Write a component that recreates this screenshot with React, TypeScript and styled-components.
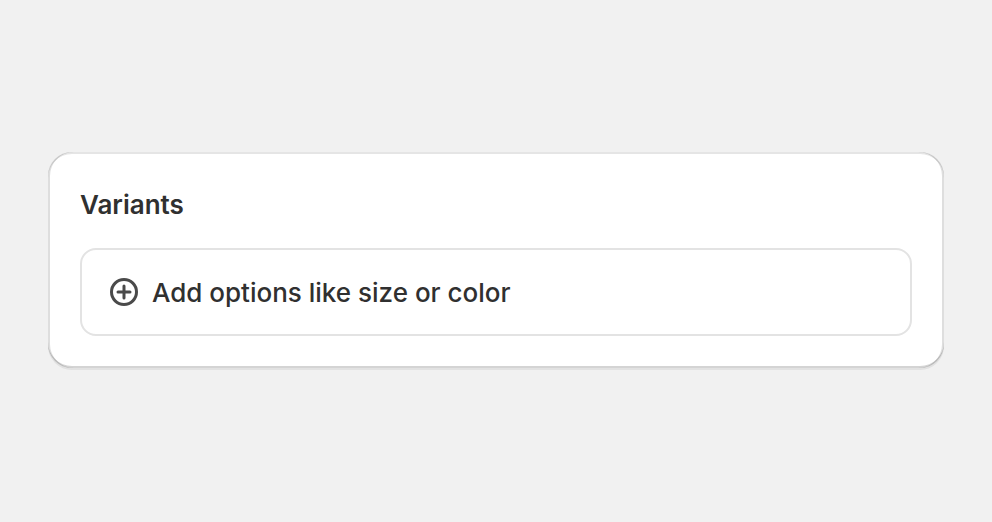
import React from "react";
import styled, { createGlobalStyle } from "styled-components";

const GlobalStyle = createGlobalStyle`
  *, *::before, *::after { box-sizing: border-box; }
  body {
    margin: 0;
    background: #f1f1f1;
    color: #303030;
    font-family: Inter, sans-serif;
  }
`;

const Page = styled.main`
  display: flex;
  align-items: center;
  min-height: 100vh;
  padding: 48px 48px 50px;
`;

const Card = styled.section`
  flex: 1;
  display: flex;
  flex-direction: column;
  gap: 22px;
  padding: 32px;
  background: #ffffff;
  border-radius: 24px;
  box-shadow:
    0 2px 0 rgba(26, 26, 26, 0.07),
    inset 2px 0 0 rgba(0, 0, 0, 0.13),
    inset -2px 0 0 rgba(0, 0, 0, 0.13),
    inset 0 -2px 0 rgba(0, 0, 0, 0.17),
    inset 0 2px 0 rgba(204, 204, 204, 0.5);
`;

const Title = styled.h2`
  margin: 0;
  font-size: 26px;
  line-height: 42px;
  font-weight: 600;
`;

const AddButton = styled.button`
  display: flex;
  align-items: center;
  gap: 8px;
  width: 100%;
  height: 88px;
  padding: 0 22px;
  border: 2px solid #e3e3e3;
  border-radius: 16px;
  background: #ffffff;
  color: inherit;
  font: 500 26px/40px Inter, sans-serif;
  text-align: left;
  cursor: pointer;
`;

const Label = styled.span`
  padding-top: 2px;
`;

const Icon = styled.svg`
  width: 40px;
  height: 40px;
  color: #4a4a4a;
`;

function PlusCircleIcon() {
  return (
    <Icon viewBox="0 0 20 20" fill="none" stroke="currentColor" strokeWidth="1.5" strokeLinecap="round" aria-hidden="true">
      <circle cx="10" cy="10" r="6.25" />
      <path d="M10 7v6M7 10h6" />
    </Icon>
  );
}

export default function App() {
  return (
    <>
      <GlobalStyle />
      <Page>
        <Card aria-labelledby="variants-title">
          <Title id="variants-title">Variants</Title>
          <AddButton type="button">
            <PlusCircleIcon />
            <Label>Add options like size or color</Label>
          </AddButton>
        </Card>
      </Page>
    </>
  );
}
